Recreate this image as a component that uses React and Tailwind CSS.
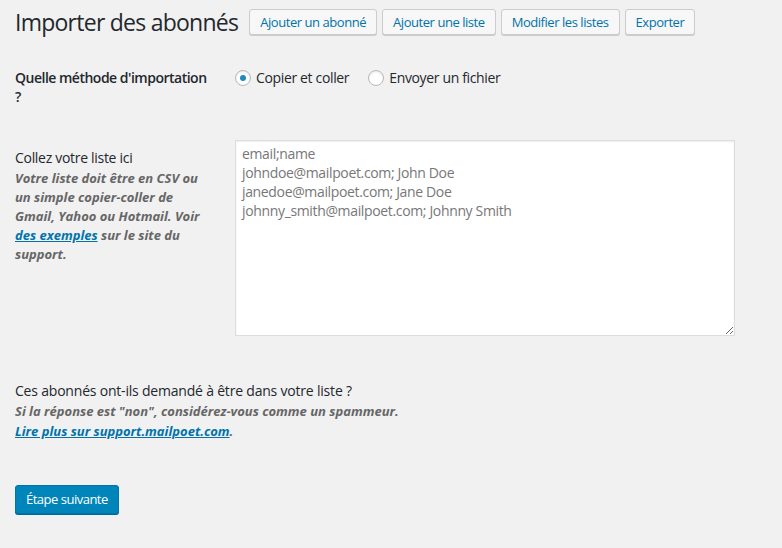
import React from 'react';

const font = { fontFamily: '"Open Sans", "Noto Sans", sans-serif' };

const HeaderButton = ({ children }) => (
  <button className="h-[26px] px-[10px] border border-[#cccccc] bg-[#f7f7f7] rounded-[3px] text-[13px] leading-[24px] tracking-[-0.45px] text-[#0073aa] shadow-[0_1px_0_#cccccc]">
    {children}
  </button>
);

const Radio = ({ checked }) => (
  <span className="w-4 h-4 rounded-full border border-[#b4b9be] bg-white shadow-[inset_0_1px_2px_rgba(0,0,0,0.1)] flex items-center justify-center">
    {checked && <span className="w-[6px] h-[6px] rounded-full bg-[#1e8cbe]" />}
  </span>
);

const Row = ({ label, children, className = '' }) => (
  <div className={`grid grid-cols-[220px_1fr] ${className}`}>
    <div className="pr-5">{label}</div>
    <div>{children}</div>
  </div>
);

export default function App() {
  return (
    <div className="min-h-[548px] bg-[#f1f1f1] text-[#23282d] px-[15px] pt-[9px]" style={font}>
      {/* Title + actions */}
      <div className="flex items-center gap-[5px]">
        <h1 className="text-[23px] leading-[26px] font-normal tracking-[-0.75px] mr-[6px]">Importer des abonnés</h1>
        <HeaderButton>Ajouter un abonné</HeaderButton>
        <HeaderButton>Ajouter une liste</HeaderButton>
        <HeaderButton>Modifier les listes</HeaderButton>
        <HeaderButton>Exporter</HeaderButton>
      </div>

      {/* Method */}
      <Row className="mt-[33px]" label={
        <div className="text-[14px] leading-[19px] font-semibold tracking-[-0.5px]">Quelle méthode d'importation ?</div>
      }>
        <div className="flex items-center gap-[19px] text-[14px] leading-[19px] tracking-[-0.35px]">
          <label className="flex items-center gap-[5px]"><Radio checked />Copier et coller</label>
          <label className="flex items-center gap-[5px]"><Radio />Envoyer un fichier</label>
        </div>
      </Row>

      {/* Paste */}
      <Row className="mt-[34px]" label={
        <div className="pt-[8px]">
          <div className="text-[14px] leading-[19px] tracking-[-0.3px]">Collez votre liste ici</div>
          <div className="text-[13px] leading-[19px] italic font-bold text-[#666666] pt-[2px]">
            Votre liste doit être en CSV ou un simple copier-coller de Gmail, Yahoo ou Hotmail. Voir{' '}
            <a className="text-[#0073aa] underline">des exemples</a> sur le site du support.
          </div>
        </div>
      }>
        <textarea
          readOnly
          className="block w-[500px] h-[196px] bg-white border border-[#dddddd] shadow-[inset_0_1px_2px_rgba(0,0,0,0.07)] px-[6px] py-[3px] text-[14px] leading-[19px] tracking-[-0.35px] text-[#777777] resize-y outline-none"
          value={'email;name\njohndoe@mailpoet.com; John Doe\njanedoe@mailpoet.com; Jane Doe\njohnny_smith@mailpoet.com; Johnny Smith'}
        />
      </Row>

      {/* Consent */}
      <div className="mt-[45px]">
        <div className="text-[14px] leading-[20px] tracking-[-0.2px]">Ces abonnés ont-ils demandé à être dans votre liste ?</div>
        <div className="text-[13px] leading-[20px] italic font-bold text-[#666666]">
          Si la réponse est "non", considérez-vous comme un spammeur.
          <br />
          <a className="text-[#0073aa] underline">Lire plus sur support.mailpoet.com</a>.
        </div>
      </div>

      <button className="mt-[44px] h-[29px] px-[10px] rounded-[3px] bg-[#0085ba] border border-[#0073aa] shadow-[0_1px_0_#006799] text-white text-[13px] leading-[27px] tracking-[-0.5px]">
        Étape suivante
      </button>
    </div>
  );
}
